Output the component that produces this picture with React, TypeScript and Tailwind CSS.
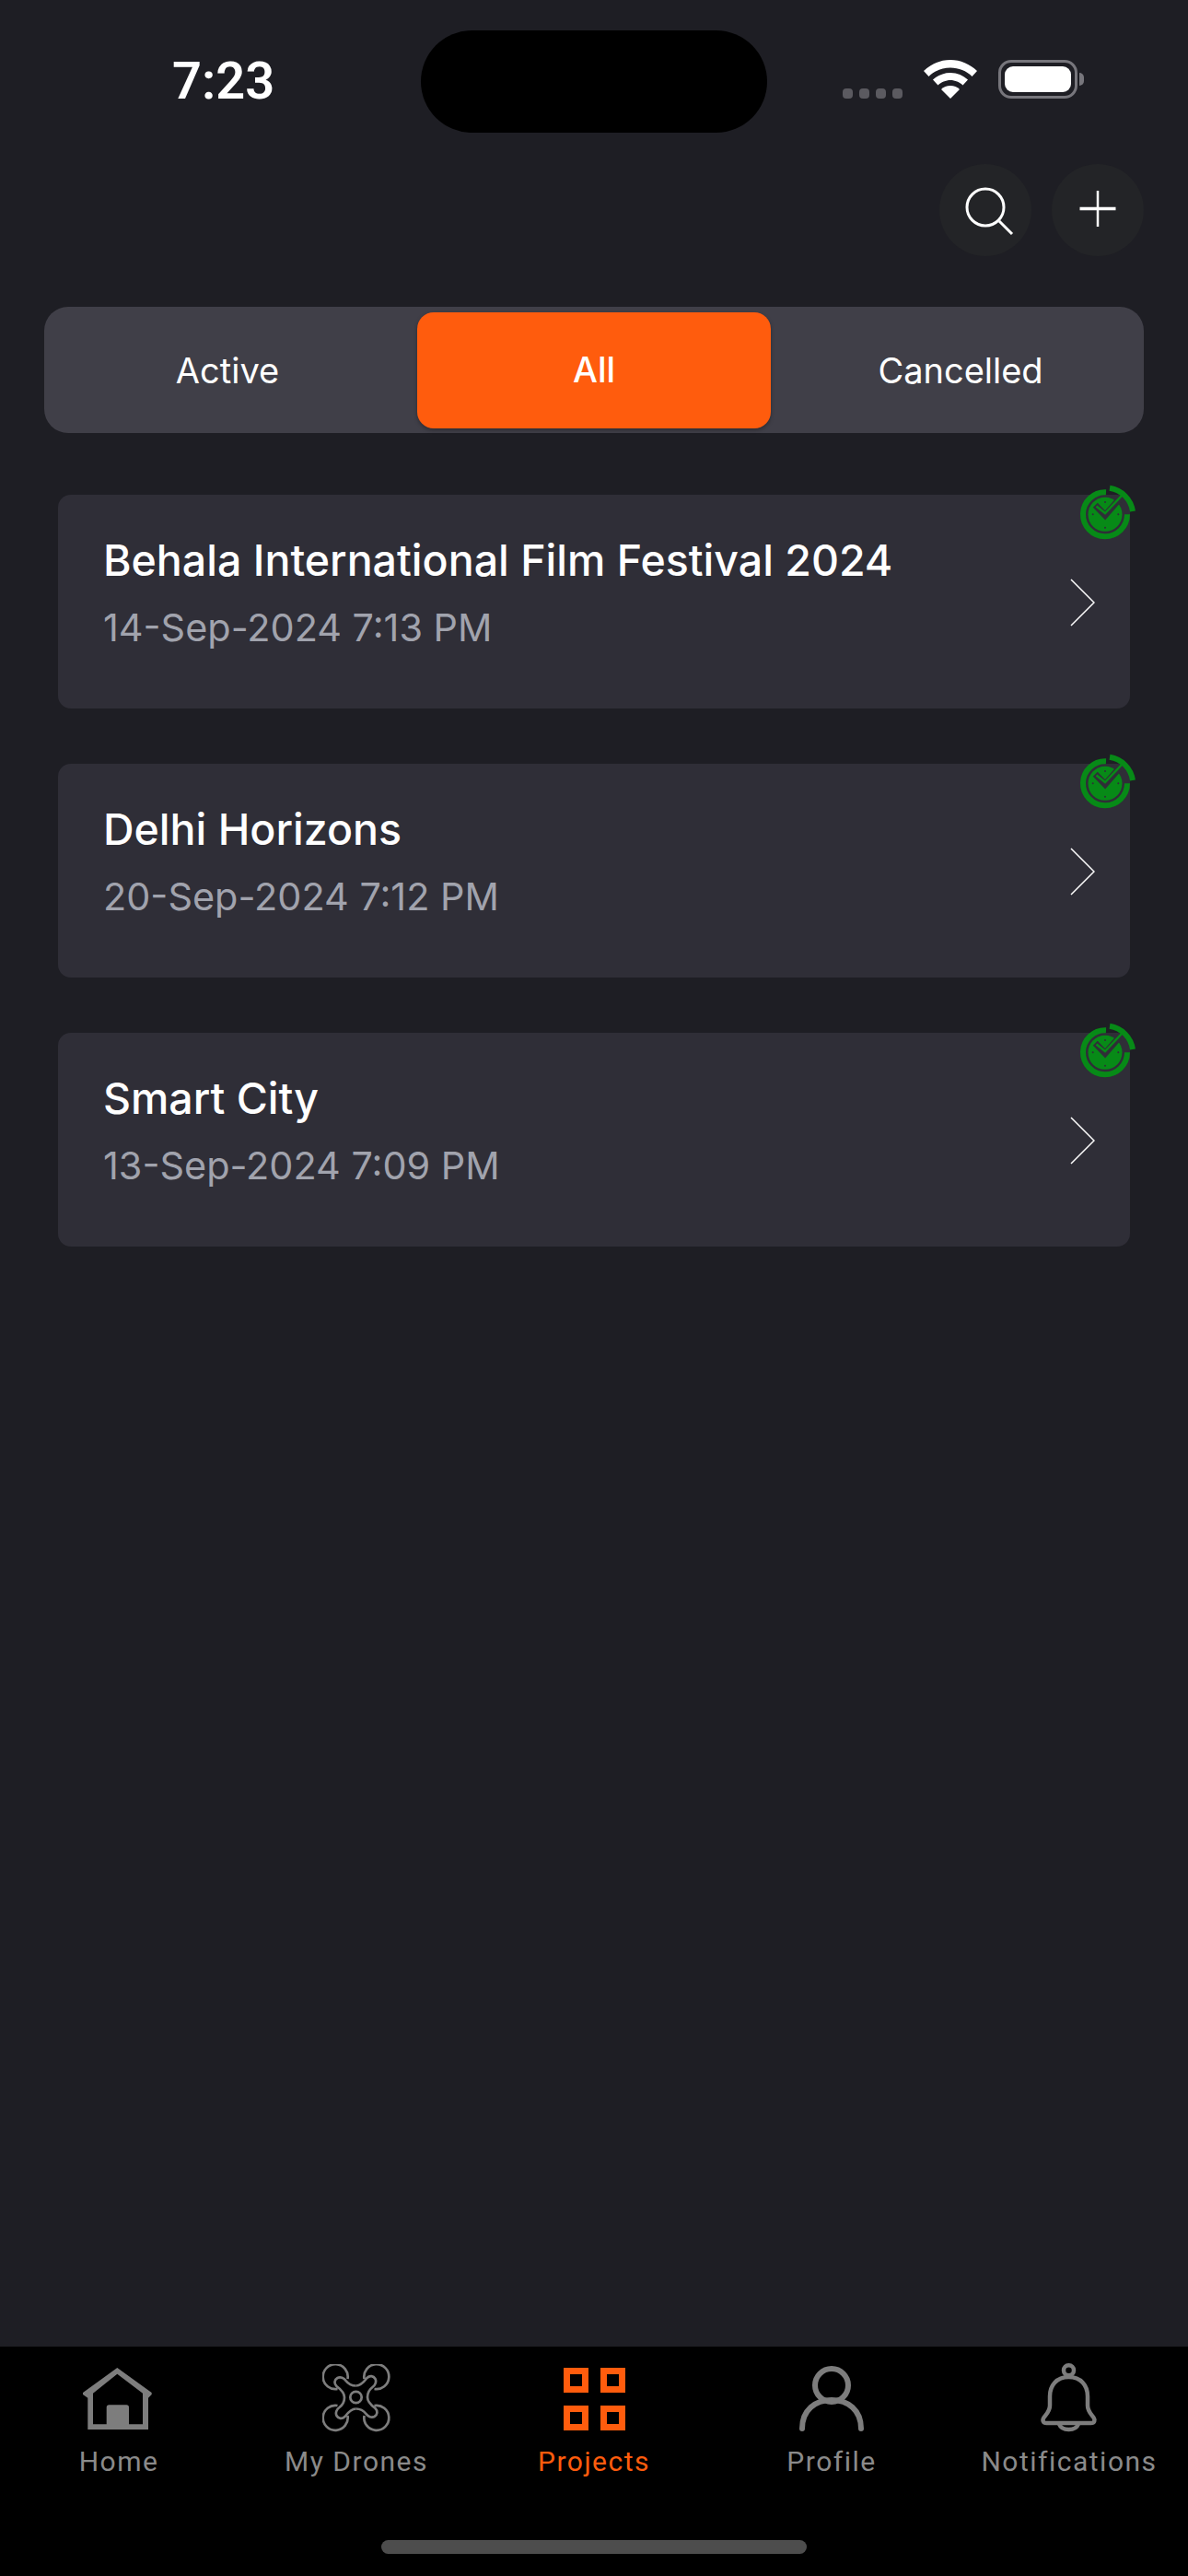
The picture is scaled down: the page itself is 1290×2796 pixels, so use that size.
import React from "react";

const projects = [
  { title: "Behala International Film Festival 2024", date: "14-Sep-2024 7:13 PM" },
  { title: "Delhi Horizons", date: "20-Sep-2024 7:12 PM" },
  { title: "Smart City", date: "13-Sep-2024 7:09 PM" },
];

function WifiIcon() {
  return (
    <svg width="58" height="42" viewBox="0 0 58 42" fill="#fff">
      <path d="M29 0C18 0 8 4.500 0 12l5.500 6C11.500 12 20 8.500 29 8.500S46.500 12 52.500 18l5.500-6C50 4.500 40 0 29 0z" />
      <path d="M29 14c-7.500 0-14 3-19 7.500l5.500 6C19 24.300 24 22 29 22s10 2.300 13.500 5.500l5.500-6C43 17 36.500 14 29 14z" />
      <path d="M29 28c-4 0-7.500 1.500-10 4l10 10 10-10c-2.500-2.500-6-4-10-4z" />
    </svg>
  );
}

function Battery() {
  return (
    <div className="flex items-center">
      <div className="w-[86px] h-[42px] rounded-[14px] border-[3px] border-[#77767c] p-[4px]">
        <div className="w-full h-full rounded-[9px] bg-white" />
      </div>
      <div className="w-[5px] h-[14px] rounded-r-full bg-[#77767c] ml-[2px]" />
    </div>
  );
}

function ClockBadge() {
  return (
    <svg width="70" height="70" viewBox="0 0 70 70" fill="none">
      <path d="M31 14.300A24 24 0 1 0 54 38.300" stroke="#078a17" strokeWidth="6" />
      <path d="M35 9.700A30 30 0 0 1 60 35" stroke="#078a17" strokeWidth="6" />
      <circle cx="30" cy="38.300" r="18.500" fill="#078a17" />
      <path d="M19.300 28.300L30 39.300 47.700 19.300" stroke="#2f2e37" strokeWidth="7" />
      <path d="M20.500 29.500L30 37 48 18" stroke="#078a17" strokeWidth="2.500" />
      <circle cx="30" cy="25" r="1" fill="#2f2e37" />
      <circle cx="16.700" cy="38.300" r="1" fill="#2f2e37" />
      <circle cx="44.300" cy="38.300" r="1" fill="#2f2e37" />
      <circle cx="30" cy="52.700" r="1" fill="#2f2e37" />
    </svg>
  );
}

function HomeIcon() {
  return (
    <svg width="80" height="75" viewBox="9 10 80 75" fill="#7d7d7d">
      <path
        fillRule="evenodd"
        d="M47.300 14L84.700 41V43L81 46.700V81H15.300V46.700L10 43V41ZM47.300 20.700L21 41.700V75.300H35.700V57Q35.700 54.300 38.400 54.300H57.300Q60 54.300 60 57V75.300H75V41.700Z"
      />
    </svg>
  );
}

function DroneIcon() {
  const quadrant = "M46 33.500C41 33.500 38 32 35 28C33 25 29 23.500 26 25C22.500 27 22 31 25 34C29 37 33.500 41 33.500 46M37 26A13.500 13.500 0 1 0 26 37";
  return (
    <svg width="75" height="75" viewBox="9.500 10 75 75" fill="none" stroke="#7d7d7d" strokeWidth="2.700">
      <circle cx="46" cy="46" r="6.200" />
      <path d={quadrant} />
      <path d={quadrant} transform="rotate(90 46 46)" />
      <path d={quadrant} transform="rotate(180 46 46)" />
      <path d={quadrant} transform="rotate(270 46 46)" />
    </svg>
  );
}

function ProjectsIcon() {
  return (
    <svg width="67" height="68" viewBox="0 0 67 68" fill="none" stroke="#ff5c0d" strokeWidth="7">
      <rect x="3.500" y="3.500" width="20" height="20" />
      <rect x="43.500" y="3.500" width="20" height="20" />
      <rect x="3.500" y="44.500" width="20" height="20" />
      <rect x="43.500" y="44.500" width="20" height="20" />
    </svg>
  );
}

function ProfileIcon() {
  return (
    <svg width="70" height="71" viewBox="0 0 70 71" fill="none" stroke="#7d7d7d" strokeWidth="6" strokeLinecap="round">
      <ellipse cx="35" cy="21" rx="18" ry="18" />
      <path d="M3 68c0-20 14-31 32-31s32 11 32 31" />
    </svg>
  );
}

function BellIcon() {
  return (
    <svg className="overflow-visible" width="75" height="75" viewBox="13.500 10 75 75" fill="none" stroke="#7d7d7d" strokeWidth="4.500" strokeLinejoin="round">
      <circle cx="50" cy="16.700" r="5.500" />
      <path d="M50 24C37 24 29.500 33 29.500 45V55C29.500 61 26 64 23 68C21 71 22 74 26 74H74C78 74 79 71 77 68C74 64 70.500 61 70.500 55V45C70.500 33 63 24 50 24Z" />
      <path d="M39.500 75C41 79 45 81 50 81S59 79 60.500 75" />
    </svg>
  );
}

const tabs = [
  { label: "Home", icon: <HomeIcon /> },
  { label: "My Drones", icon: <DroneIcon /> },
  { label: "Projects", icon: <ProjectsIcon />, active: true },
  { label: "Profile", icon: <ProfileIcon /> },
  { label: "Notifications", icon: <BellIcon /> },
];

export default function App() {
  return (
    <div className="w-[1290px] h-[2796px] bg-[#1e1e24] flex flex-col font-['Inter',sans-serif] text-white overflow-hidden">
      {/* status bar */}
      <div className="h-[178px] shrink-0 pt-[33px] pl-[187px] pr-[113px] flex items-start">
        <span className="w-[270px] mt-[32px] text-[56px] leading-[46px] font-semibold font-['Roboto',sans-serif]">7:23</span>
        <div className="w-[376px] h-[111px] rounded-[56px] bg-black" />
        <div className="ml-auto flex items-end gap-[23px] mt-[32px]">
          <div className="flex gap-[7px]">
            <span className="w-[11px] h-[11px] rounded-[4px] bg-[#5b5a60]" />
            <span className="w-[11px] h-[11px] rounded-[4px] bg-[#5b5a60]" />
            <span className="w-[11px] h-[11px] rounded-[4px] bg-[#5b5a60]" />
            <span className="w-[11px] h-[11px] rounded-[4px] bg-[#5b5a60]" />
          </div>
          <WifiIcon />
          <Battery />
        </div>
      </div>

      {/* actions */}
      <div className="h-[100px] shrink-0 flex justify-end gap-[22px] pr-[48px]">
        <button className="w-[100px] h-[100px] rounded-full bg-[#232427]">
          <svg width="100" height="100" viewBox="0 0 100 100" fill="none" stroke="#fff" strokeWidth="3">
            <circle cx="50" cy="47" r="20" />
            <path d="M65 62L79 76" />
          </svg>
        </button>
        <button className="w-[100px] h-[100px] rounded-full bg-[#232427]">
          <svg width="100" height="100" viewBox="0 0 100 100" fill="none" stroke="#fff">
            <path d="M30.500 48.500H69.500" strokeWidth="3.500" />
            <path d="M50 29V68" strokeWidth="2.500" />
          </svg>
        </button>
      </div>

      {/* segment */}
      <div className="mx-[48px] mt-[55px] h-[137px] rounded-[26px] bg-[#403f48] grid grid-cols-[405px_384px_405px] items-center text-[38px]">
        <div className="text-center pr-[7px] pt-[1px]">Active</div>
        <div className="h-[126px] rounded-[18px] bg-[#ff5c0d] flex items-center justify-center font-medium shadow-[0_2px_4px_rgba(0,0,0,0.3)]">All</div>
        <div className="text-center pl-[7px] pt-[1px]">Cancelled</div>
      </div>

      {/* cards */}
      <div className="mx-[63px] mt-[67px] flex flex-col gap-[60px]">
        {projects.map((p) => (
          <div key={p.title} className="relative h-[232px] rounded-[14px] bg-[#2f2e37] pl-[49px] pt-[41px]">
            <div className="text-[46.500px] leading-[60px] font-[450]">{p.title}</div>
            <div className="mt-[18px] text-[41.400px] leading-[50px] text-[#a1a3ad]">{p.date}</div>
            <svg className="absolute right-[38px] top-[91px]" width="27" height="52" viewBox="0 0 27 52" fill="none" stroke="#fff" strokeWidth="1.500">
              <path d="M1 1l25 25L1 51" />
            </svg>
            <div className="absolute -top-[17px] -right-[13px]">
              <ClockBadge />
            </div>
          </div>
        ))}
      </div>

      {/* tab bar */}
      <div className="mt-auto h-[249px] bg-black flex flex-col">
        <div className="grid grid-cols-5 pt-[19px] h-[210px]">
          {tabs.map((t) => (
            <div key={t.label} className="flex flex-col items-center">
              <div className="h-[75px] flex items-center justify-center">{t.icon}</div>
              <span className={`mt-[11px] text-[30px] leading-[40px] tracking-[1.5px] font-['Roboto',sans-serif] ${t.active ? "text-[#ff5c0d]" : "text-[#8a8a8a]"}`}>
                {t.label}
              </span>
            </div>
          ))}
        </div>
        <div className="w-[462px] h-[15px] rounded-full bg-[#4d4d4d] mx-auto" />
      </div>
    </div>
  );
}
